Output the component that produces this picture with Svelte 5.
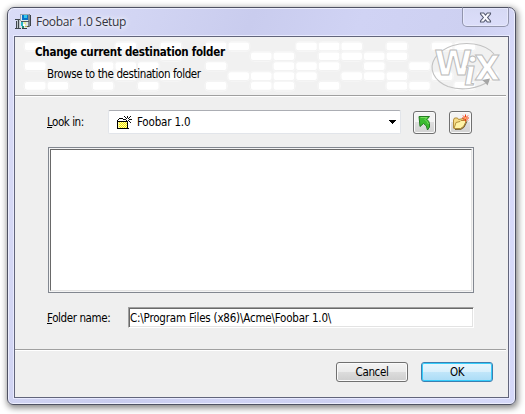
<script>
  const rows = [
    [0, 2, 4, 6, 8, 9, 12, 13, 14, 16, 18, 19],
    [6, 10, 11, 13, 14, 15, 16],
    [0, 3, 4, 5, 8, 11, 12, 13, 15, 17],
    [4, 6, 9, 10, 11, 12, 14, 15, 16, 18, 20],
    [0, 1, 3, 5, 8, 10, 11, 13, 16, 17, 19],
  ];
  const tiles = rows.flatMap((cols, r) => cols.map((c) => ({ x: 10 + c * 22.6, y: 5.5 + r * 9.9 })));
  let folder = $state('C:\\Program Files (x86)\\Acme\\Foobar 1.0\\');
</script>

<div class="desktop">
  <div class="window">
    <div class="titlebar">
      <svg class="appicon" width="16" height="16" viewBox="0 0 16 16" shape-rendering="crispEdges">
        <path d="M5 0h8v9H5z" fill="#e4eaee" /><path d="M13 0h2v13h-2z" fill="#7d878d" /><path d="M15 1h1v11h-1z" fill="#3c4247" />
        <path d="M5 0h9v1H5zM5 0h1v7H5z" fill="#9aa7b1" />
        <path d="M7 1h6v5H7z" fill="#0874c8" /><path d="M9 1h3v3H9z" fill="#35c6e8" />
        <path d="M6 7h8v1H6z" fill="#4d565c" /><path d="M6 8h7v6H6z" fill="#dfe5e8" /><path d="M7 14h5v1H7z" fill="#394046" /><path d="M12 12h2v1h-2z" fill="#555" />
        <path d="M6 8h2v4H6z" fill="#29b7c4" /><path d="M9 8h2v3H9z" fill="#e9ed9b" /><path d="M7 12h2v2H7z" fill="#238b70" /><path d="M10 12h2v1h-2z" fill="#c4b94d" /><path d="M8 10h2v2H8z" fill="#fff" />
        <path d="M0 5h5v1H0zM3 6h1v9H3zM0 14h6v1H0zM1 7h1v7H1z" fill="#41474d" />
        <path d="M2 6h1v8H2zM4 6h1v8H4z" fill="#c0c7cb" />
      </svg>
      <span class="caption">Foobar 1.0 Setup</span>
      <button class="close" aria-label="Close">
        <svg width="13" height="11" viewBox="0 0 13 11"><path d="M1.5 1h3.2L6.5 3.2 8.3 1h3.2v1L8.6 5.5l2.9 3.5v1H8.3L6.5 7.8 4.7 10H1.5V9l2.9-3.5L1.5 2z" fill="#fafaff" stroke="#555a70" stroke-width="1.1" /></svg>
      </button>
    </div>
    <div class="client">
      <header>
        <svg class="pattern" width="493" height="58" viewBox="0 0 493 58">
          {#each tiles as t}
            <rect x={t.x - 1} y={t.y - 1} width="22.6" height="10" rx="3.5" fill="none" stroke="#f6f6f6" />
          {/each}
          {#each tiles as t}
            <rect x={t.x} y={t.y} width="20.6" height="7.7" rx="2" fill="#fff" />
          {/each}
          <path d="M474 44C463 52 446 54 433 49.500C419 44 413 32 420 21C428 9 445 5 459 7C468 8.500 475 12 479 17" fill="none" stroke="#c2c2c2" stroke-width="1.1" />
          <text class="logo"><tspan x="419.500" y="38" font-size="34">W</tspan><tspan class="slant" x="449" y="48" font-size="43">i</tspan><tspan x="459.500" y="43" font-size="33">X</tspan></text>
          <path d="M467 43l8-1.500-2.500 7-2-2.500z" fill="#a5a5a5" />
        </svg>
        <h1>Change current destination folder</h1>
        <p>Browse to the destination folder</p>
      </header>
      <hr />
      <main>
        <div class="look">
          <span class="label"><u>L</u>ook in:</span>
          <div class="combo">
            <svg class="newfolder" width="16" height="14" viewBox="0 0 16 14" shape-rendering="crispEdges">
              <path d="M1 5h10v7H1z" fill="#fffbb0" />
              <path d="M2 6h1v1H2zM4 6h1v1H4zM6 6h1v1H6zM8 6h1v1H8zM3 7h1v1H3zM5 7h1v1H5zM7 7h1v1H7zM9 7h1v1H9zM2 8h1v1H2zM4 8h1v1H4zM6 8h1v1H6zM8 8h1v1H8zM3 9h1v1H3zM5 9h1v1H5zM7 9h1v1H7zM9 9h1v1H9zM2 10h1v1H2zM4 10h1v1H4zM6 10h1v1H6zM8 10h1v1H8zM3 11h1v1H3zM5 11h1v1H5zM7 11h1v1H7zM9 11h1v1H9z" fill="#f4ea00" />
              <path d="M0 4h1v9H0zM1 12h11v1H1zM10 6h1v6h-1zM1 5h9v1H1zM1 3h1v1H1zM2 2h4v1H2zM6 3h1v1H6z" fill="#000" />
              <path d="M10 0h1v2h-1zM7 0h1v1H7zM8 1h1v1H8zM13 0h1v1h-1zM12 1h1v1h-1zM7 3h2v1H7zM12 3h3v1h-3zM9 4h1v1H9zM11 4h1v1h-1zM10 5h1v2h-1zM12 5h1v1h-1zM13 6h1v1h-1zM9 2h1v1H9zM11 2h1v1h-1z" fill="#111" />
            </svg>
            <span>Foobar 1.0</span>
            <svg class="chevron" width="7" height="4" viewBox="0 0 7 4" shape-rendering="crispEdges"><path d="M0 0h7v1H0zM1 1h5v1H1zM2 2h3v1H2zM3 3h1v1H3z" /></svg>
          </div>
          <button class="tool" aria-label="Up one level">
            <svg width="15" height="16" viewBox="0 0 15 16"><path d="M2 1.500h10.500L10 4.500Q12 6 12.500 8.500V12l-2 3Q10 10 6.500 8.500L3 11.500z" fill="#3cbc30" stroke="#237d20" stroke-width="1" /><path d="M3.500 2.500h6.500L8 4.500Q10.500 6.500 11.500 9" fill="none" stroke="#7ade60" /></svg>
          </button>
          <button class="tool" aria-label="New folder">
            <svg width="19" height="17" viewBox="0 0 19 17"><path d="M2.500 14V6l1-2h3l1 1.500 5-1 1 1.500v6l-4 3z" fill="#f6dc86" stroke="#b18a38" /><path d="M3 14.500l2-6 4-1 1-1h5.500l-3 6-3 2z" fill="#fff3a6" stroke="#b3903d" /><path d="M4 15.500l6-.2 3-2 3-6" fill="none" stroke="#776132" /><path d="M14.500 0.500v7M11 4h7M12 1.500l5 5M17 1.500l-5 5" stroke="#f33a10" stroke-width="1" /><path d="M13.500 3h2v2h-2z" fill="#ffad62" /></svg>
          </button>
        </div>
        <div class="list"><div></div></div>
        <div class="name">
          <label class="label" for="folder"><u>F</u>older name:</label>
          <input id="folder" bind:value={folder} spellcheck="false" />
        </div>
      </main>
      <hr />
      <footer>
        <button class="push">Cancel</button>
        <button class="push default">OK</button>
      </footer>
    </div>
  </div>
</div>

<style>
  :global(body) { background: #fff; overflow: hidden; }
  * { box-sizing: border-box; }
  .desktop { height: 414px; padding: 7px; font: 11.5px/14px "DejaVu Sans Condensed", "DejaVu Sans", sans-serif; color: #000; }
  .window {
    width: 509px; height: 398px; border: 1px solid #4f5263; border-radius: 7px 7px 6px 6px;
    padding: 0 6px 6px; background: linear-gradient(110deg, #dadcf7 0%, #d2d5f3 20%, #c9ccee 38%, #d0d3f4 55%, #cdd0f1 72%, #d9dbfa 82%, #d5d8f8 100%);
    box-shadow: inset 0 0 0 1px #eceefd, 1px 2px 6px 1px rgba(0,0,0,.48);
  }
  .titlebar { height: 28px; display: flex; align-items: flex-start; padding-left: 1px; }
  .appicon { margin-top: 6px; flex: none; }
  .caption { font: 12px/16px "Open Sans", "Noto Sans", sans-serif; margin: 6px 0 0 5px; white-space: nowrap; color: #33343d; letter-spacing: -.3px; text-shadow: 0 0 7px #fff, 0 0 5px #fff; }
  button { padding: 0; font: inherit; color: #000; display: flex; align-items: center; justify-content: center; }
  .close { width: 47px; height: 20px; margin: -1px 0 0 auto; border: 1px solid #9295ad; border-top-color: #4f5263; border-radius: 0 0 5px 5px; background: linear-gradient(#d6d9f4, #dcdefa); box-shadow: inset 0 0 0 1px #e6e8fb; }
  .client { width: 495px; height: 362px; border: 1px solid #62657b; background: #efefef; box-shadow: 0 0 0 1px #e8eaff; display: flex; flex-direction: column; }
  header { height: 58px; position: relative; background: #f1f1f1; padding: 8px 0 0 20px; }
  .pattern { position: absolute; left: 0; top: 0; }
  .logo { font-family: "DejaVu Sans", sans-serif; font-weight: bold; fill: #fff; stroke: #bbb; stroke-width: 1; }
  .slant { font-family: "Liberation Serif", serif; font-style: italic; }
  h1, p { position: relative; margin: 0; white-space: nowrap; }
  h1 { font-size: 11.5px; line-height: 14px; font-weight: bold; letter-spacing: -.27px; }
  p { margin: 8px 0 0 12px; letter-spacing: -.39px; }
  hr { width: 491px; height: 2px; flex: none; margin: 0; border: 0; border-top: 1px solid #a0a0a0; border-bottom: 1px solid #fff; }
  main { height: 252px; padding: 13px 34px 0 33px; }
  .look { display: flex; align-items: center; height: 24px; }
  .label { width: 61px; flex: none; white-space: nowrap; margin-left: -1px; letter-spacing: -.47px; }
  .combo { width: 293px; height: 24px; flex: none; background: #fff; border: 1px solid #e2e5ea; border-top-color: #abadb3; border-radius: 2px; display: flex; align-items: center; padding: 0 4px 0 8px; gap: 4px; }
  .combo span { letter-spacing: -.18px; }
  .newfolder { margin-top: 2px; }
  .chevron { margin-left: auto; }
  .tool { width: 23px; height: 23px; flex: none; margin: 1px 0 0 12px; border: 1px solid #707070; border-radius: 3px; background: linear-gradient(#f3f3f3 0 48%, #dedede 50%, #d2d2d2); box-shadow: inset 0 0 0 1px #fafafa; }
  .tool + .tool { margin-left: 13px; }
  .list { width: 426px; height: 146px; margin-top: 13px; border: 1px solid #828790; padding: 1px; background: #f4f4f4; }
  .list div { height: 100%; background: #fff; border: 1px solid #696969; border-right-color: #e3e3e3; border-bottom-color: #e3e3e3; }
  .name { display: flex; align-items: center; margin-top: 14px; }
  .name .label { width: 81px; letter-spacing: -.4px; }
  input { width: 346px; height: 21px; border: 1px solid; border-color: #a0a0a0 #fff #fff #a0a0a0; box-shadow: inset 1px 1px #696969, inset -1px -1px #e3e3e3; padding: 0 1px; background: #fff; color: #000; font: inherit; letter-spacing: -.2px; outline: none; border-radius: 0; }
  footer { display: flex; justify-content: flex-end; gap: 13px; padding: 11px 15px 0 0; }
  .push { width: 72px; height: 20px; border: 1px solid #707070; border-radius: 3px; background: linear-gradient(#f3f3f3, #ebebeb 48%, #dcdcdc 50%, #cecece); box-shadow: inset 0 0 0 1px #fafafa; letter-spacing: -.35px; }
  .default { border-color: #3c7fb1; background: linear-gradient(#e9f6fd, #d9f0fc 48%, #c1e6fa 50%, #aadcf6); box-shadow: inset 0 0 0 1px #36cdfb; }
</style>
